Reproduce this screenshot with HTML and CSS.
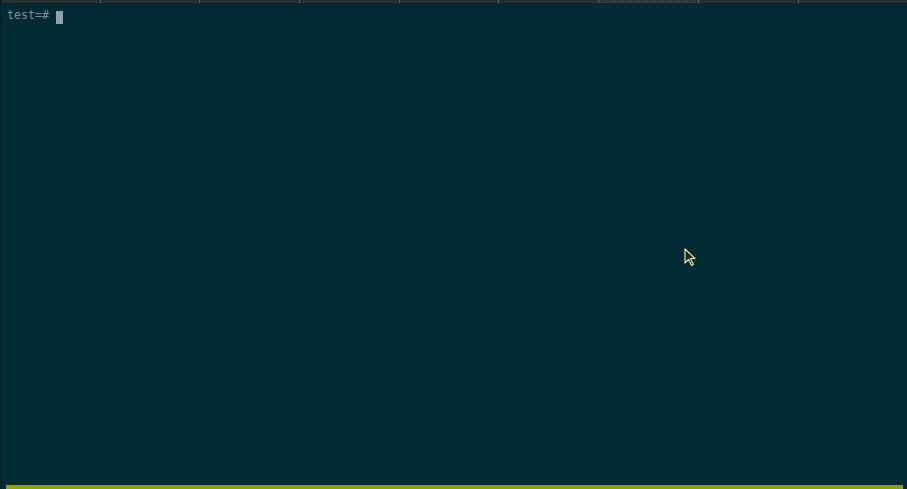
FILE: index.html
```html
<!DOCTYPE html>
<html>
<head>
<meta charset="utf-8">
<link rel="stylesheet" href="styles.css">
</head>
<body>
	<div class="term">
		<div class="tabs">
			<div class="tab first"></div><div class="tab"></div><div class="tab"></div>
			<div class="tab"></div><div class="tab"></div><div class="tab"></div>
			<div class="tab dots"></div><div class="tab"></div><div class="tab last"></div>
		</div>
		<div class="screen">
			<div class="line">test=# <span class="cursor">&nbsp;</span></div>
			<svg class="pointer" width="14" height="20" viewBox="0 0 14 20">
				<path d="M1 1 L1 15 L4.5 11.5 L7.5 17.5 L9.5 16.5 L6.5 10.5 L11 10.5 Z" fill="#1b2a24" stroke="#e8e4a0" stroke-width="1.2" stroke-linejoin="round"/>
			</svg>
		</div>
		<div class="status"></div>
	</div>
</body>
</html>
```
FILE: styles.css
```css
html, body {
	margin		: 0;
	padding		: 0;
	background-color: #022a33;
}
.term {
	width		: 907px;
	height		: 489px;
	display		: flex;
	flex-direction	: column;
	background-color: #022a33;
	border-left	: 2px solid #01222a;
	box-sizing	: border-box;
}
.tabs {
	display		: flex;
	height		: 3px;
	background-color: #2b2f31;
}
.tab {
	width		: 99.7px;
	flex-shrink	: 0;
	border-right	: 1px solid #4d6470;
	box-sizing	: border-box;
}
.tab.first {
	width		: 98.7px;
}
.tab.dots {
	background-image: repeating-linear-gradient(90deg, #3a3c3d 0 1px, #2b2f31 1px 2px);
}
.tab.last {
	flex		: 1;
	border-right	: none;
}
.screen {
	flex		: 1;
	position	: relative;
	padding		: 5px 0 0 5px;
}
.line {
	font-family	: "DejaVu Sans Mono", "Liberation Mono", monospace;
	font-size	: 11.6px;
	line-height	: 14px;
	color		: #7f9093;
	white-space	: pre;
}
.cursor {
	display		: inline-block;
	width		: 7px;
	height		: 13px;
	vertical-align	: -3px;
	background-color: #8fa3a6;
}
.pointer {
	position	: absolute;
	left		: 682px;
	top		: 245px;
}
.status {
	height		: 4px;
	margin		: 0 4px 0 4px;
	background-color: #8da100;
}
```
